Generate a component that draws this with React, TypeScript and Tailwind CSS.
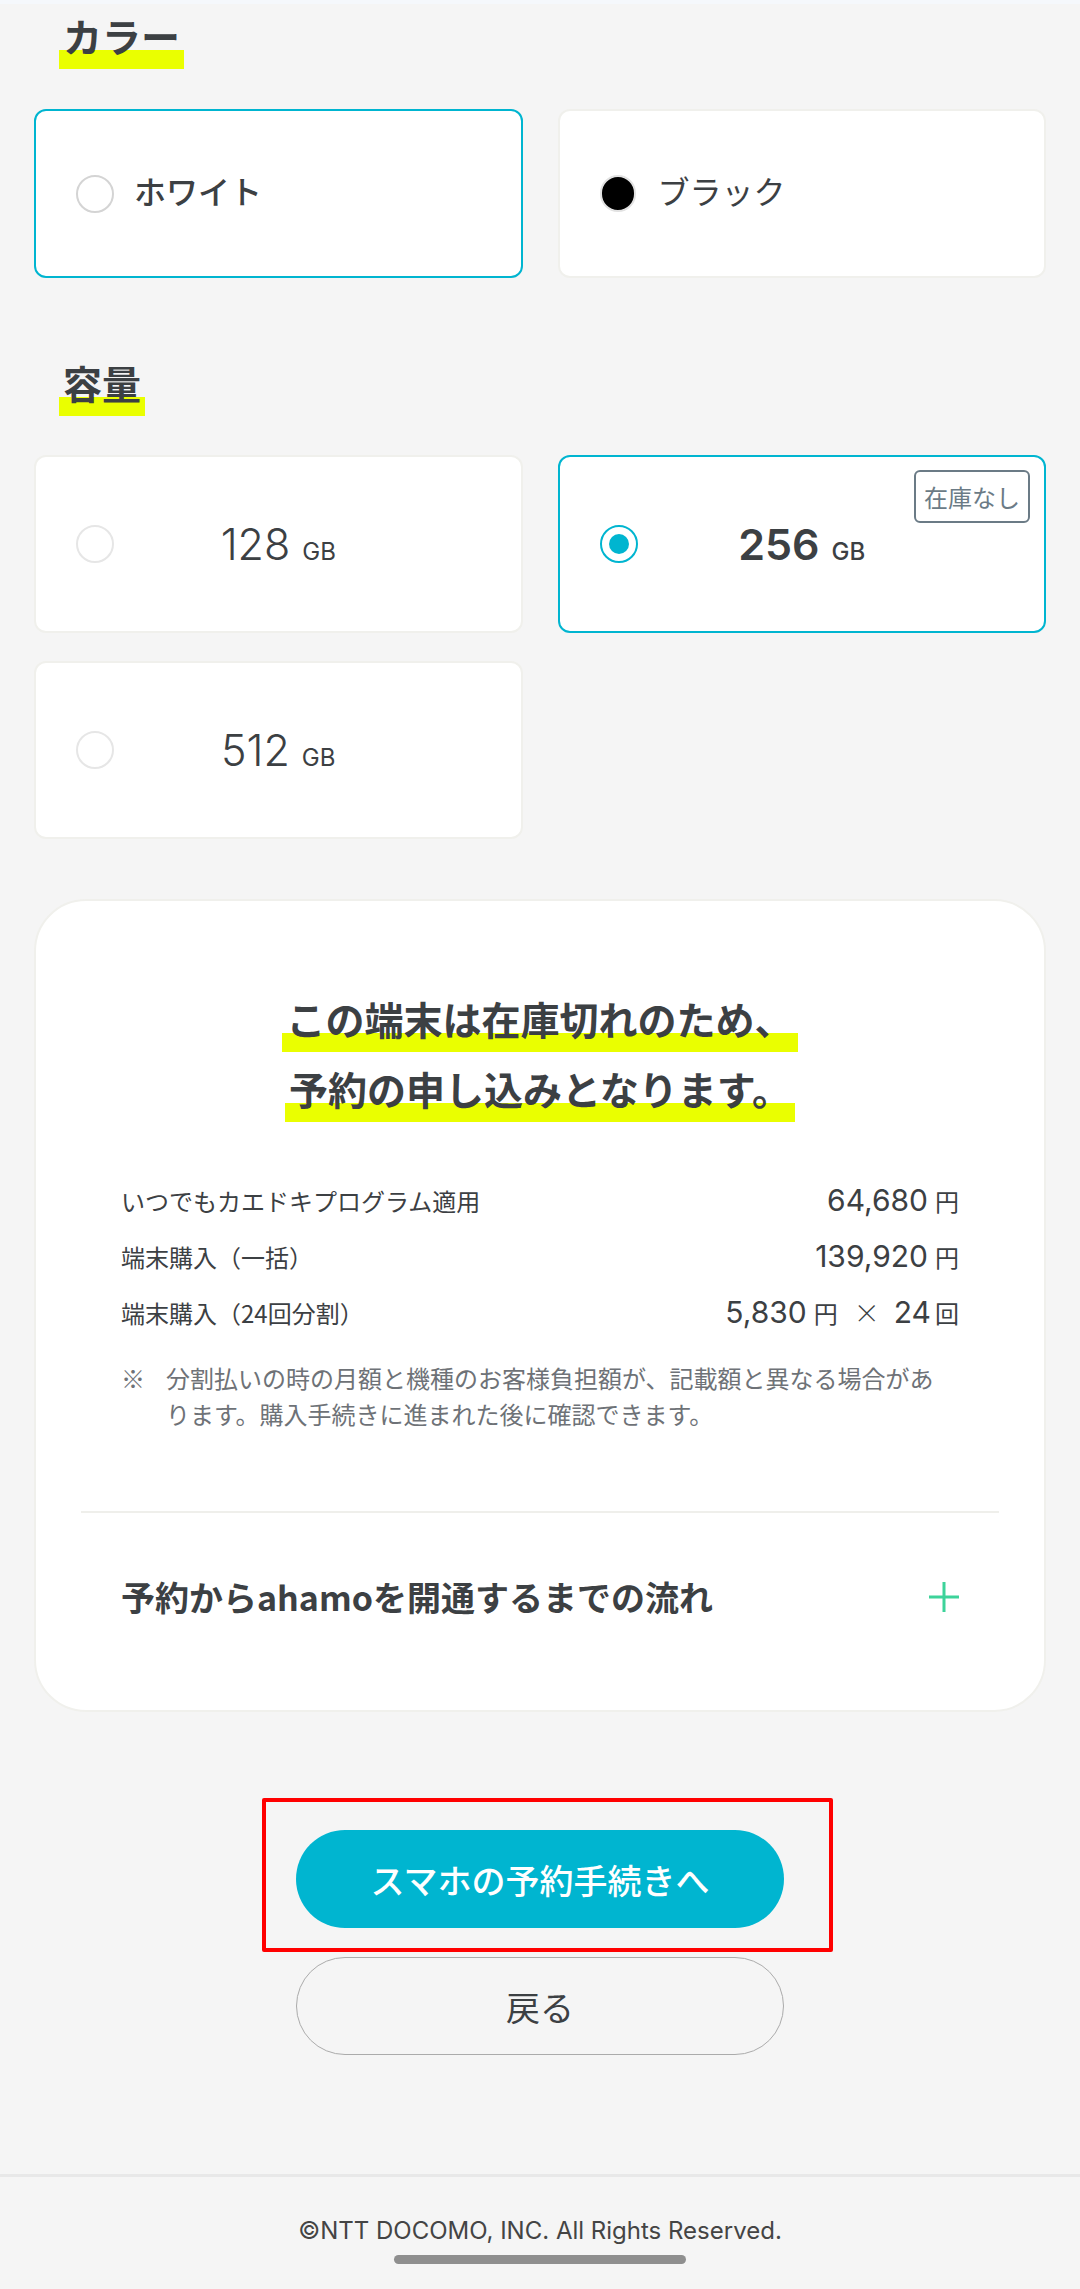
import React from "react";

const HL =
  "inline-block px-[4px] pb-[9px] text-[39px] font-bold leading-[50px] text-[#3c4043] bg-[linear-gradient(to_bottom,transparent_40px,#eaff00_40px)]";

function CapCard({
  value,
  selected,
  badge,
}: {
  value: string;
  selected?: boolean;
  badge?: boolean;
}) {
  return (
    <div
      className={
        "relative grid h-[178px] grid-cols-[1fr_auto_1fr] items-center rounded-[12px] border-2 bg-white " +
        (selected ? "border-[#00b5d0]" : "border-[#f0f0ec]")
      }
    >
      <div className="pl-[40px]">
        {selected ? (
          <div className="flex h-[38px] w-[38px] items-center justify-center rounded-full border-2 border-[#00b5d0]">
            <div className="h-[20px] w-[20px] rounded-full bg-[#00b5d0]" />
          </div>
        ) : (
          <div className="h-[38px] w-[38px] rounded-full border-2 border-[#e6e6e6]" />
        )}
      </div>
      <div
        className={
          "flex items-baseline gap-[12px] font-['Inter',sans-serif] text-[#3c4043] " +
          (selected ? "font-semibold" : "font-light")
        }
      >
        <span className="text-[43px] leading-none">{value}</span>
        <span className={"text-[24px] leading-none " + (selected ? "font-medium" : "font-normal")}>GB</span>
      </div>
      <div />
      {badge && (
        <div className="absolute right-[14px] top-[13px] flex h-[53px] items-center rounded-[6px] border-2 border-[#6b7b86] px-[8px] text-[24px] leading-none text-[#6b7b86]">
          在庫なし
        </div>
      )}
    </div>
  );
}

function PriceRow({ label, children }: { label: string; children: React.ReactNode }) {
  return (
    <div className="flex h-[32px] items-baseline justify-between text-[#3c4043]">
      <span className="text-[24px] leading-[32px]">{label}</span>
      <span className="flex items-baseline">{children}</span>
    </div>
  );
}

function Num({ v }: { v: string }) {
  return <span className="font-['Inter',sans-serif] text-[30px] leading-[32px]">{v}</span>;
}

function Unit({ v }: { v: string }) {
  return <span className="ml-[7px] text-[24px] leading-[32px]">{v}</span>;
}

export default function App() {
  return (
    <div className="min-h-[2289px] w-[1080px] bg-[#f5f5f5] font-['Noto_Sans_CJK_JP','Noto_Sans',sans-serif] text-[#3c4043]">
      <div className="h-[4px] bg-[#f5f8fc]" />

      <div className="px-[34px]">
        {/* Color */}
        <div className="mt-[6px] pl-[25px]">
          <span className={HL}>カラー</span>
        </div>
        <div className="mt-[40px] grid grid-cols-2 gap-x-[35px]">
          <div className="flex h-[169px] items-center gap-[20px] rounded-[12px] border-2 border-[#00b5d0] bg-white pl-[40px]">
            <div className="h-[38px] w-[38px] rounded-full border-2 border-[#d4d4d4]" />
            <span className="pb-[8px] text-[32px] font-medium leading-none">ホワイト</span>
          </div>
          <div className="flex h-[169px] items-center gap-[22px] rounded-[12px] border-2 border-[#f0f0ec] bg-white pl-[40px]">
            <div className="h-[37px] w-[36px] rounded-full border-2 border-[#e2e2e2] bg-black" />
            <span className="pb-[8px] text-[32px] font-normal leading-none">ブラック</span>
          </div>
        </div>

        {/* Capacity */}
        <div className="mt-[79px] pl-[25px]">
          <span className={HL}>容量</span>
        </div>
        <div className="mt-[39px] grid grid-cols-2 gap-x-[35px] gap-y-[28px]">
          <CapCard value="128" />
          <CapCard value="256" selected badge />
          <CapCard value="512" />
        </div>

        {/* Reservation card */}
        <div className="mt-[60px] rounded-[52px] border-2 border-[#f0f0ec] bg-white px-[45px] pt-[92px]">
          <div className="flex flex-col items-center gap-[11px]">
            <span className={HL}>この端末は在庫切れのため、</span>
            <span className={HL}>予約の申し込みとなります。</span>
          </div>

          <div className="mt-[62px] flex flex-col gap-[24px] px-[40px]">
            <PriceRow label="いつでもカエドキプログラム適用">
              <Num v="64,680" />
              <Unit v="円" />
            </PriceRow>
            <PriceRow label="端末購入（一括）">
              <Num v="139,920" />
              <Unit v="円" />
            </PriceRow>
            <PriceRow label="端末購入（24回分割）">
              <Num v="5,830" />
              <Unit v="円" />
              <span className="ml-[16px] mr-[14px] text-[26px] font-light leading-[32px]">×</span>
              <Num v="24" />
              <span className="ml-[4px] text-[24px] leading-[32px]">回</span>
            </PriceRow>
          </div>

          <div className="mt-[32px] flex px-[40px] text-[24px] leading-[36px] text-[#6e7277]">
            <span className="w-[45px] shrink-0">※</span>
            <p className="w-[785px]">
              分割払いの時の月額と機種のお客様負担額が、記載額と異なる場合があります。購入手続きに進まれた後に確認できます。
            </p>
          </div>

          <div className="mt-[79px] h-[2px] bg-[#efefeb]" />

          <div className="flex items-center justify-between px-[40px] pb-[91px] pt-[62px]">
            <span className="text-[34px] font-bold leading-[44px] text-[#3c4043]">
              予約からahamoを開通するまでの流れ
            </span>
            <svg width="30" height="30" viewBox="0 0 30 30" className="shrink-0">
              <path d="M15 0V30M0 15H30" stroke="#3dd39a" strokeWidth="3" fill="none" />
            </svg>
          </div>
        </div>
      </div>

      {/* Buttons */}
      <div className="ml-[262px] mt-[86px] w-[571px] rounded-[2px] border-4 border-[#ff0000] pb-[20px] pl-[30px] pr-[45px] pt-[28px]">
        <button className="flex h-[98px] w-[488px] items-center justify-center rounded-full bg-[#00b5d0] text-[34px] font-medium text-white">
          スマホの予約手続きへ
        </button>
      </div>
      <div className="mt-[5px] flex justify-center">
        <button className="flex h-[98px] w-[488px] items-center justify-center rounded-full border-[1.5px] border-[#ababab] text-[34px] font-normal text-[#3c4043]">
          戻る
        </button>
      </div>

      {/* Footer */}
      <div className="mt-[119px] h-[3px] bg-[#e8e8e8]" />
      <div className="mt-[38px] text-center font-['Inter',sans-serif] text-[24px] leading-[32px] text-[#444]">
        ©NTT DOCOMO, INC. All Rights Reserved.
      </div>
      <div className="mx-auto mt-[8px] h-[9px] w-[292px] rounded-full bg-[#8f8f8f]" />
      <div className="h-[25px]" />
    </div>
  );
}
